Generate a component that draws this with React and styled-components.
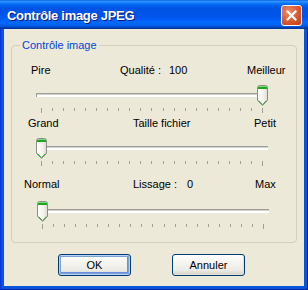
import React from "react";
import styled, { createGlobalStyle } from "styled-components";

const Global = createGlobalStyle`
  html, body { margin: 0; padding: 0; width: 308px; height: 290px; overflow: hidden; background: #0855DD; }
  * { box-sizing: border-box; }
`;

const Window = styled.div`
  width: 308px;
  height: 290px;
  display: flex;
  flex-direction: column;
  font-family: "Liberation Sans", Arial, sans-serif;
  font-size: 11px;
`;

const TitleBar = styled.div`
  height: 29px;
  flex: none;
  display: flex;
  align-items: center;
  justify-content: space-between;
  padding: 0 6px 0 7px;
  background: linear-gradient(
    to bottom,
    #0058ee 0%,
    #3593ff 4%,
    #288eff 7%,
    #127dff 10%,
    #036ffc 14%,
    #0262ee 18%,
    #0057e5 24%,
    #0054e3 30%,
    #0055eb 56%,
    #005bf5 66%,
    #026afe 76%,
    #0062ef 86%,
    #0052d6 92%,
    #0040ab 96%,
    #003092 100%
  );
`;

const Title = styled.span`
  color: #fff;
  font-weight: bold;
  font-size: 13px;
  letter-spacing: -0.3px;
  text-shadow: 1px 1px 0 #0a1883;
  padding-top: 1px;
`;

const CloseButton = styled.div`
  width: 21px;
  height: 21px;
  border: 1px solid #fff;
  border-radius: 3px;
  background: radial-gradient(circle at 35% 30%, #e98d6c 0%, #d9582f 55%, #c13c14 100%);
  display: flex;
  align-items: center;
  justify-content: center;
  margin-top: 2px;
`;

const Frame = styled.div`
  flex: 1;
  display: flex;
  padding: 0 4px 4px 4px;
  background: #0855dd;
  box-shadow: inset 1px 0 0 #0831d9, inset -1px 0 0 #001ea0, inset 0 -1px 0 #001ea0;
`;

const Body = styled.div`
  flex: 1;
  background: #ece9d8;
  display: flex;
  flex-direction: column;
  padding: 16px 7px 10px 7px;
`;

const Group = styled.div`
  position: relative;
  border: 1px solid #d0d0bf;
  border-radius: 4px;
  padding: 18px 0 13px 0;
  display: flex;
  flex-direction: column;
`;

const Legend = styled.span`
  position: absolute;
  top: -7px;
  left: 8px;
  padding: 0 2px;
  background: #ece9d8;
  color: #0046d5;
  line-height: 13px;
`;

const LabelRow = styled.div`
  display: grid;
  grid-template-columns: ${(p) => p.$cols};
  padding-left: ${(p) => p.$left}px;
  margin-top: ${(p) => p.$mt}px;
  line-height: 13px;
  height: 13px;
  color: #000;
  white-space: nowrap;
`;

const Label = styled.span`
  white-space: nowrap;
`;

const SliderBox = styled.div`
  position: relative;
  margin-left: ${(p) => 24 + (p.$offset || 0)}px;
  margin-top: ${(p) => p.$mt}px;
  width: 232px;
  height: 28px;
`;

const TrackArea = styled.div`
  height: 21px;
  display: flex;
  align-items: flex-start;
  padding-top: 8px;
`;

const Track = styled.div`
  width: 232px;
  height: 4px;
  background: #fff;
  border-top: 1px solid #9d9c99;
  border-left: 1px solid #9d9c99;
  box-shadow: inset 0 1px 0 #d4d2c8;
`;

const ThumbWrap = styled.div`
  position: absolute;
  top: 0;
  width: 11px;
  height: 21px;
  line-height: 0;
`;

const Ticks = styled.div`
  margin-top: 2px;
  margin-left: 5px;
  width: 222px;
  display: flex;
  justify-content: space-between;
  align-items: flex-start;
`;

const Tick = styled.span`
  width: 1px;
  height: ${(p) => (p.$end ? 5 : 3)}px;
  background: #a19f98;
`;

const ButtonRow = styled.div`
  display: flex;
  gap: 41px;
  padding-left: 47px;
  margin-top: 11px;
`;

const Button = styled.button`
  width: 73px;
  height: 22px;
  padding: 0;
  font-family: "Liberation Sans", Arial, sans-serif;
  font-size: 11px;
  color: #000;
  border: 1px solid #003c74;
  border-radius: 3px;
  background: linear-gradient(to bottom, #ffffff 0%, #f5f4ef 40%, #ecebe6 75%, #d6d0c5 100%);
  box-shadow: ${(p) =>
    p.$default
      ? "inset 0 0 0 1px #b8d2fb, inset 0 0 0 2px #7da2ce, inset -1px -1px 0 2px #6e8fe0"
      : "inset -1px -1px 0 #e3e0d5"};
`;

function Thumb() {
  return (
    <svg width="11" height="21" viewBox="0 0 11 21">
      <defs>
        <linearGradient id="thumbFill" x1="0" y1="0" x2="1" y2="0">
          <stop offset="0" stopColor="#ffffff" />
          <stop offset="0.6" stopColor="#f3f2ec" />
          <stop offset="1" stopColor="#dcd9cd" />
        </linearGradient>
      </defs>
      <path
        d="M0.5 2.5 Q0.5 0.5 2.5 0.5 H8.5 Q10.5 0.5 10.5 2.5 V15.5 L5.5 20.5 L0.5 15.5 Z"
        fill="url(#thumbFill)"
        stroke="#8d8c86"
      />
      <rect x="1" y="1" width="9" height="1" fill="#7bd87b" />
      <rect x="1" y="2" width="9" height="2" fill="#21a621" />
      <path d="M1.5 15.5 L5.5 19.5 L9.5 15.5" fill="none" stroke="#45b045" />
    </svg>
  );
}

function Slider({ value, mt, offset }) {
  const left = Math.round((value / 100) * 221);
  return (
    <SliderBox $mt={mt} $offset={offset}>
      <TrackArea>
        <Track />
      </TrackArea>
      <ThumbWrap style={{ left }}>
        <Thumb />
      </ThumbWrap>
      <Ticks>
        {Array.from({ length: 21 }, (_, i) => (
          <Tick key={i} $end={i === 0 || i === 20} />
        ))}
      </Ticks>
    </SliderBox>
  );
}

export default function App() {
  return (
    <>
      <Global />
      <Window>
        <TitleBar>
          <Title>Contrôle image JPEG</Title>
          <CloseButton>
            <svg width="11" height="11" viewBox="0 0 11 11">
              <path d="M1.5 1.5 L9.5 9.5 M9.5 1.5 L1.5 9.5" stroke="#fff" strokeWidth="2.2" strokeLinecap="square" />
            </svg>
          </CloseButton>
        </TitleBar>
        <Frame>
          <Body>
            <Group>
              <Legend>Contrôle image</Legend>
              <LabelRow $cols="89px 49px 78px auto" $left={19} $mt={0}>
                <Label>Pire</Label>
                <Label>Qualité :</Label>
                <Label>100</Label>
                <Label>Meilleur</Label>
              </LabelRow>
              <Slider value={100} mt={8} />
              <LabelRow $cols="105px 121px auto" $left={16} $mt={4}>
                <Label>Grand</Label>
                <Label>Taille fichier</Label>
                <Label>Petit</Label>
              </LabelRow>
              <Slider value={0} mt={8} />
              <LabelRow $cols="109px 54px 68px auto" $left={12} $mt={12}>
                <Label>Normal</Label>
                <Label>Lissage :</Label>
                <Label>0</Label>
                <Label>Max</Label>
              </LabelRow>
              <Slider value={0} mt={10} offset={1} />
            </Group>
            <ButtonRow>
              <Button $default>OK</Button>
              <Button>Annuler</Button>
            </ButtonRow>
          </Body>
        </Frame>
      </Window>
    </>
  );
}
